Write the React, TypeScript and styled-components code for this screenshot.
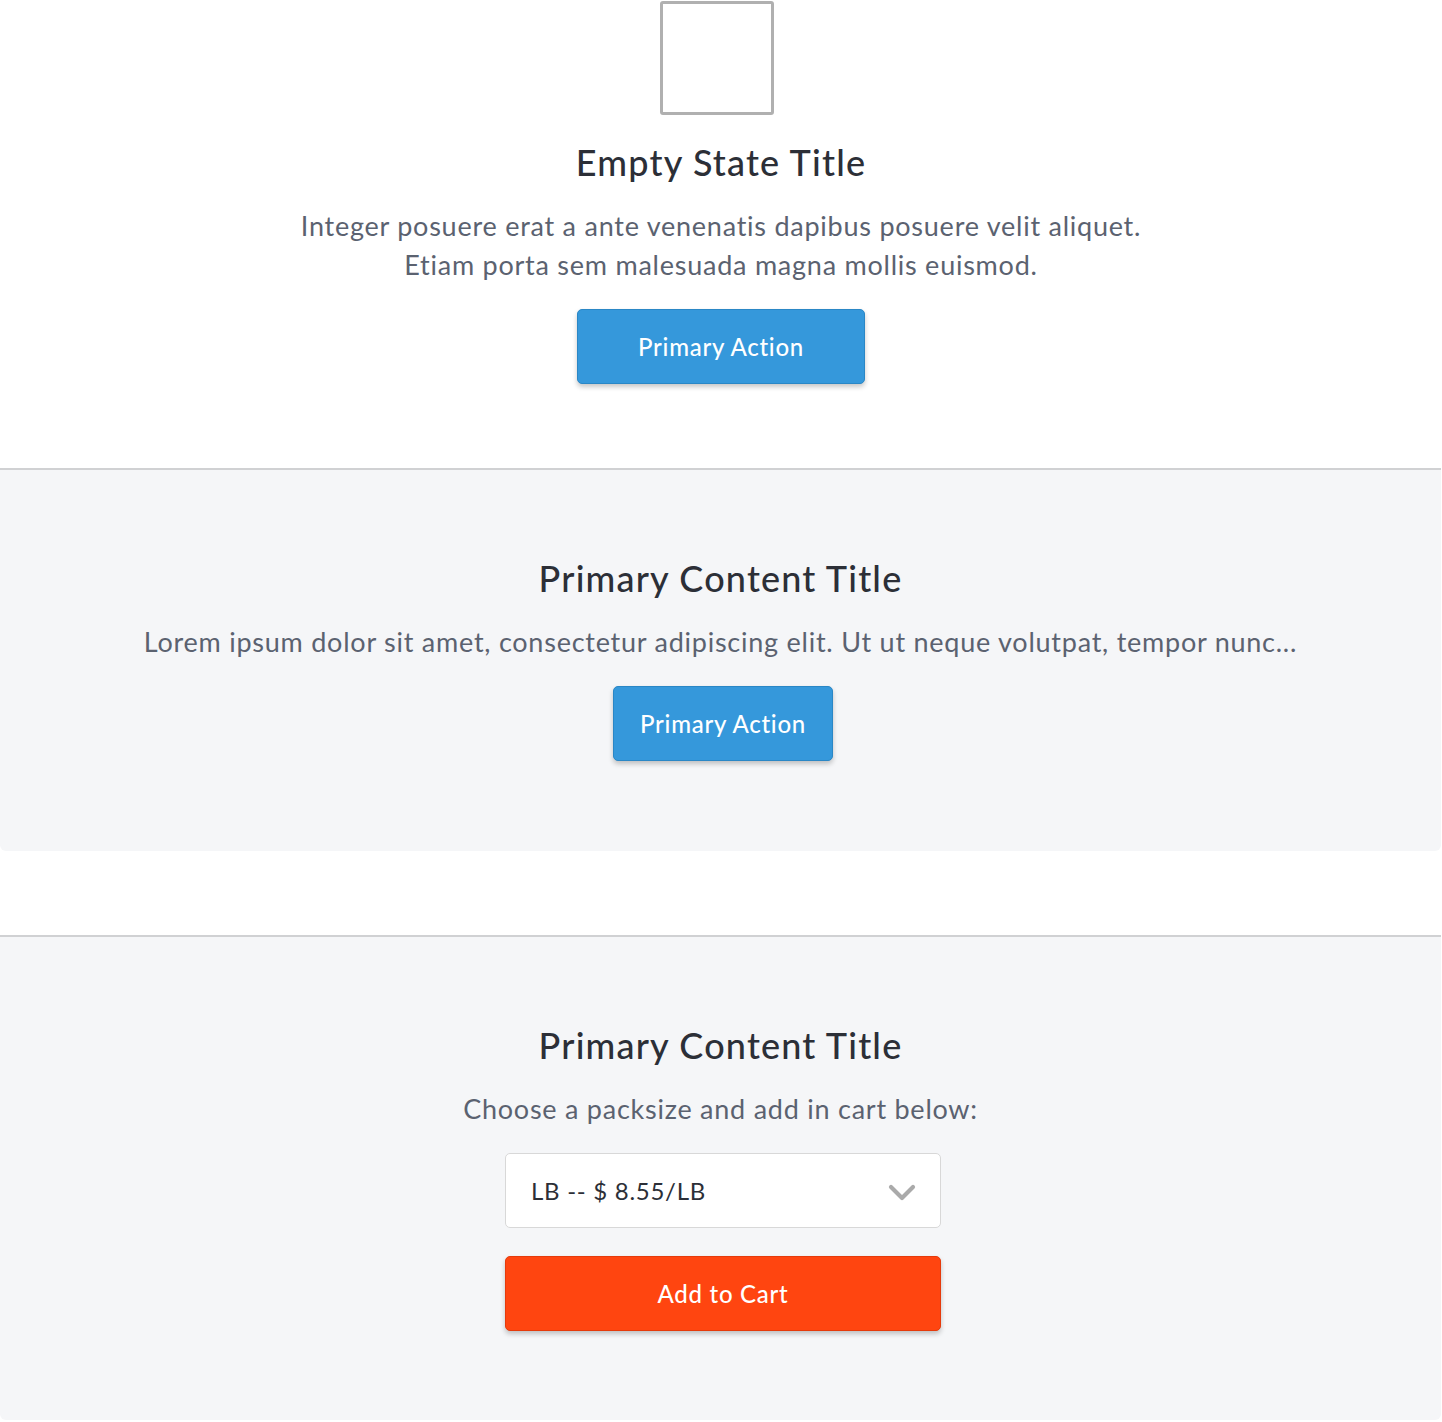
import React from "react";
import styled, { createGlobalStyle } from "styled-components";

const Global = createGlobalStyle`
  html, body { margin: 0; padding: 0; background: #ffffff; }
  body { font-family: Lato, "Open Sans", sans-serif; letter-spacing: 0.03em; -webkit-font-smoothing: antialiased; }
  * { box-sizing: border-box; }
`;

const Page = styled.div`
  display: flex;
  flex-direction: column;
  width: 1442px;
`;

const Section = styled.section<{ $tinted?: boolean; $gapAfter?: number; $padBottom?: number }>`
  display: flex;
  flex-direction: column;
  align-items: center;
  text-align: center;
  background: ${(p) => (p.$tinted ? "#f5f6f8" : "#ffffff")};
  border-top: ${(p) => (p.$tinted ? "2px solid #d0d1d3" : "none")};
  border-radius: ${(p) => (p.$tinted ? "0 0 6px 6px" : "0")};
  width: ${(p) => (p.$tinted ? "1441px" : "1442px")};
  padding: ${(p) => (p.$tinted ? "86px" : "1px")} 0 ${(p) => p.$padBottom ?? 84}px;
  margin-bottom: ${(p) => p.$gapAfter ?? 0}px;
`;

const Placeholder = styled.div`
  width: 114px;
  height: 114px;
  border: 3px solid #b0b0b0;
  border-radius: 3px;
  margin: 0 9px 25px 0;
`;

const Title = styled.h2`
  margin: 0;
  font-family: Lato, sans-serif;
  font-weight: 500;
  font-size: 36px;
  line-height: 44px;
  letter-spacing: 0.033em;
  color: #2c2f37;
`;

const Text = styled.p`
  margin: 22px 0 0;
  font-family: Lato, sans-serif;
  font-weight: 400;
  font-size: 27px;
  line-height: 39px;
  letter-spacing: 0.028em;
  color: #5b6270;
`;

const Button = styled.button<{ $variant?: "blue" | "orange"; $width: number; $offset?: number; $top?: number }>`
  display: flex;
  align-items: center;
  justify-content: center;
  width: ${(p) => p.$width}px;
  height: 75px;
  margin: ${(p) => p.$top ?? 25}px 0 0 ${(p) => p.$offset ?? 0}px;
  font-family: Lato, sans-serif;
  font-size: 24px;
  font-weight: 500;
  letter-spacing: 0.03em;
  color: #ffffff;
  background: ${(p) => (p.$variant === "orange" ? "#ff4510" : "#3598db")};
  border: 1px solid ${(p) => (p.$variant === "orange" ? "#e53a0b" : "#2a87c6")};
  border-radius: 5px;
  box-shadow: 0 3px 5px rgba(0, 0, 0, 0.22);
  cursor: pointer;
  padding: 0;
`;

const Select = styled.div`
  display: flex;
  align-items: center;
  justify-content: space-between;
  width: 436px;
  height: 75px;
  margin: 25px 0 0 5px;
  padding: 0 24px 0 25px;
  background: #ffffff;
  border: 1.5px solid #d8d8d8;
  border-radius: 5px;
  font-family: Lato, sans-serif;
  font-size: 24px;
  letter-spacing: 0.03em;
  color: #2c2f37;
`;

const ChevronWrap = styled.span`
  display: flex;
  padding-top: 5px;
`;

const Chevron = () => (
  <ChevronWrap>
    <svg width="28" height="18" viewBox="0 0 28 18" aria-hidden="true">
      <path d="M3 3 L14 14 L25 3" fill="none" stroke="#aaaaaa" strokeWidth="4.2" strokeLinecap="round" strokeLinejoin="round" />
    </svg>
  </ChevronWrap>
);

export default function App() {
  return (
    <>
      <Global />
      <Page>
        <Section $padBottom={84}>
          <Placeholder />
          <Title>Empty State Title</Title>
          <Text>
            Integer posuere erat a ante venenatis dapibus posuere velit aliquet.
            <br />
            Etiam porta sem malesuada magna mollis euismod.
          </Text>
          <Button $width={288} $top={25}>Primary Action</Button>
        </Section>
        <Section $tinted $gapAfter={84} $padBottom={90}>
          <Title>Primary Content Title</Title>
          <Text>Lorem ipsum dolor sit amet, consectetur adipiscing elit. Ut ut neque volutpat, tempor nunc...</Text>
          <Button $width={220} $offset={5}>Primary Action</Button>
        </Section>
        <Section $tinted $padBottom={89}>
          <Title>Primary Content Title</Title>
          <Text>Choose a packsize and add in cart below:</Text>
          <Select>
            <span>LB -- $ 8.55/LB</span>
            <Chevron />
          </Select>
          <Button $variant="orange" $width={436} $offset={5} $top={28}>Add to Cart</Button>
        </Section>
      </Page>
    </>
  );
}
